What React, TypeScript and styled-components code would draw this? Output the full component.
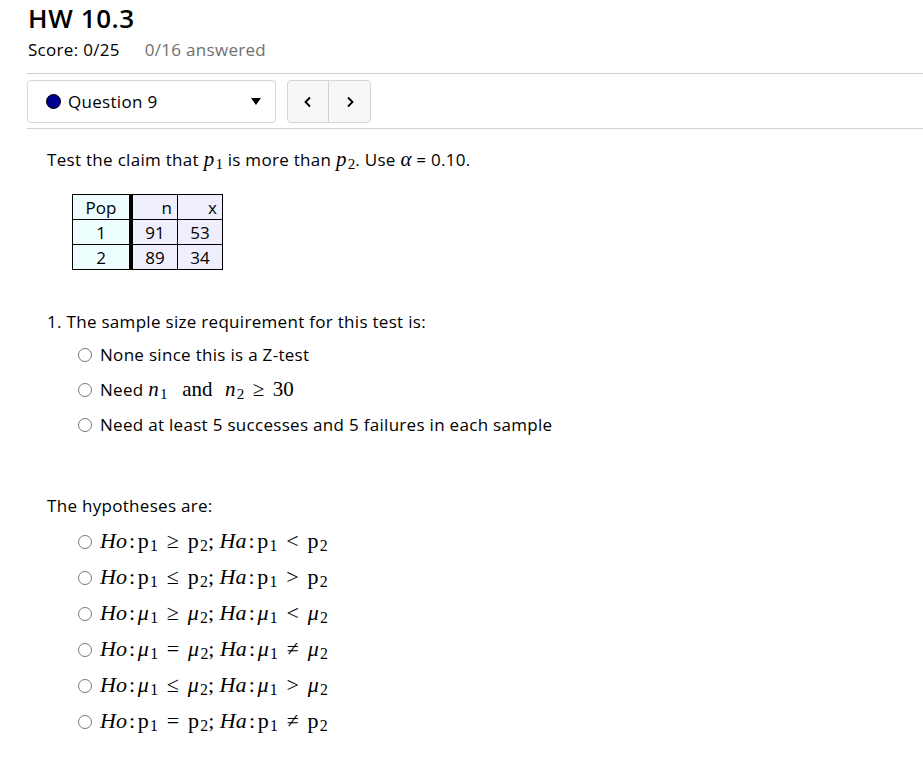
import React from "react";
import styled, { createGlobalStyle } from "styled-components";

const Global = createGlobalStyle`
  html, body { margin: 0; padding: 0; background: #fff; }
  body { font-family: "Open Sans", "Noto Sans", sans-serif; color: #000; letter-spacing: 0.3px; }
`;

const Page = styled.div`
  padding: 1px 0 0 27px;
  width: 896px;
`;

const Title = styled.h1`
  margin: 0 0 0 1px;
  font-size: 26px;
  font-weight: 600;
  line-height: 34px;
  letter-spacing: 0.6px;
`;

const ScoreRow = styled.div`
  display: flex;
  gap: 25px;
  margin: 3px 0 0 1px;
  font-size: 17px;
  line-height: 24px;
`;

const Muted = styled.span`
  color: #6f6f6f;
`;

const Rule = styled.hr<{ $top: number }>`
  border: 0;
  border-top: 1px solid #d0d0d0;
  margin: ${(p) => p.$top}px 0 0 0;
`;

const Toolbar = styled.div`
  display: flex;
  gap: 11px;
  margin-top: 6px;
`;

const Select = styled.div`
  box-sizing: border-box;
  width: 249px;
  height: 43px;
  border: 1px solid #d6d6d6;
  border-radius: 4px;
  display: flex;
  align-items: center;
  padding: 0 14px 0 18px;
  font-size: 17px;
`;

const Dot = styled.span`
  width: 13px;
  height: 13px;
  border-radius: 50%;
  background: #00008f;
  border: 1px solid #000;
  margin-right: 7px;
`;

const Caret = styled.span`
  margin-left: auto;
  width: 0;
  height: 0;
  border-left: 5px solid transparent;
  border-right: 5px solid transparent;
  border-top: 7px solid #000;
`;

const NavGroup = styled.div`
  display: flex;
  box-sizing: border-box;
  height: 43px;
  border: 1px solid #d6d6d6;
  border-radius: 4px;
  background: #f7f7f7;
  overflow: hidden;
`;

const NavBtn = styled.button<{ $first?: boolean }>`
  width: 41px;
  border: 0;
  border-right: ${(p) => (p.$first ? "1px solid #d0d0d0" : "0")};
  background: transparent;
  display: flex;
  align-items: center;
  justify-content: center;
  padding: 0;
`;

const Question = styled.div`
  padding: 18px 0 0 20px;
  font-size: 17px;
  line-height: 24px;
`;

const MathText = styled.span<{ $size?: number }>`
  font-family: "Liberation Serif", "DejaVu Serif", serif;
  font-size: ${(p) => p.$size ?? 21}px;
  letter-spacing: 0;
  white-space: pre;
`;

const It = styled.span`
  font-style: italic;
`;

const Sub = styled.span`
  font-style: normal;
  font-size: 0.72em;
  position: relative;
  top: 0.22em;
  margin-left: 0.08em;
`;

const Rel = styled.span`
  margin: 0 0.4em;
`;

const Colon = styled.span`
  margin: 0 0.12em 0 0.1em;
`;

const Word = styled.span`
  margin: 0 0.6em 0 0.7em;
`;

const Table = styled.table`
  border-collapse: collapse;
  margin: 21px 0 0 25px;
  font-size: 17px;
  line-height: 22px;
`;

const Cell = styled.td<{ $pop?: boolean; $align?: string }>`
  border: 1px solid #000;
  border-right: ${(p) => (p.$pop ? "4px solid #000" : "1px solid #000")};
  background: ${(p) => (p.$pop ? "#eefefe" : "#efeefd")};
  padding: 1px 5px 0 5px;
  height: 23px;
  text-align: ${(p) => p.$align || "center"};
  width: ${(p) => (p.$pop ? "46px" : "34px")};
  letter-spacing: 0;
`;

const Part = styled.div<{ $top: number }>`
  margin-top: ${(p) => p.$top}px;
`;

const Options = styled.div<{ $gap: number; $top: number }>`
  display: flex;
  flex-direction: column;
  gap: ${(p) => p.$gap}px;
  padding-left: 31px;
  margin-top: ${(p) => p.$top}px;
`;

const Option = styled.label`
  display: flex;
  align-items: center;
  gap: 8px;
  height: 24px;
`;

const Radio = styled.span`
  box-sizing: border-box;
  width: 14px;
  height: 14px;
  border-radius: 50%;
  border: 1px solid #767676;
  background: #fff;
  flex: none;
`;

const Var = ({ v, s, upright }: { v: string; s: string; upright?: boolean }) => (
  <span>
    {upright ? v : <It>{v}</It>}
    <Sub>{s}</Sub>
  </span>
);

const hyps: [string, string, string][] = [
  ["p", "≥", "<"],
  ["p", "≤", ">"],
  ["μ", "≥", "<"],
  ["μ", "=", "≠"],
  ["μ", "≤", ">"],
  ["p", "=", "≠"],
];

const Chevron = ({ dir }: { dir: "l" | "r" }) => (
  <svg width="10" height="12" viewBox="0 0 10 12">
    <path
      d={dir === "l" ? "M7 1.5 L2.5 6 L7 10.5" : "M3 1.5 L7.5 6 L3 10.5"}
      fill="none"
      stroke="#000"
      strokeWidth="1.8"
    />
  </svg>
);

export default function App() {
  return (
    <>
      <Global />
      <Page>
        <Title>HW 10.3</Title>
        <ScoreRow>
          <span>Score: 0/25</span>
          <Muted>0/16 answered</Muted>
        </ScoreRow>
        <Rule $top={11} />
        <Toolbar>
          <Select>
            <Dot />
            Question 9
            <Caret />
          </Select>
          <NavGroup>
            <NavBtn $first>
              <Chevron dir="l" />
            </NavBtn>
            <NavBtn>
              <Chevron dir="r" />
            </NavBtn>
          </NavGroup>
        </Toolbar>
        <Rule $top={5} />
        <Question>
          <div>
            Test the claim that{" "}
            <MathText><Var v="p" s="1" /></MathText> is more than{" "}
            <MathText><Var v="p" s="2" /></MathText>. Use{" "}
            <MathText><It>α</It></MathText> = 0.10.
          </div>
          <Table>
            <tbody>
              <tr>
                <Cell $pop>Pop</Cell>
                <Cell $align="right">n</Cell>
                <Cell $align="right">x</Cell>
              </tr>
              <tr>
                <Cell $pop>1</Cell>
                <Cell>91</Cell>
                <Cell>53</Cell>
              </tr>
              <tr>
                <Cell $pop>2</Cell>
                <Cell>89</Cell>
                <Cell>34</Cell>
              </tr>
            </tbody>
          </Table>
          <Part $top={40}>
            <div>1. The sample size requirement for this test is:</div>
            <Options $gap={11} $top={9}>
              <Option>
                <Radio />
                None since this is a Z-test
              </Option>
              <Option>
                <Radio />
                <span>
                  Need{" "}
                  <MathText>
                    <Var v="n" s="1" />
                    <Word>and</Word>
                    <Var v="n" s="2" />
                    <Rel>≥</Rel>30
                  </MathText>
                </span>
              </Option>
              <Option>
                <Radio />
                Need at least 5 successes and 5 failures in each sample
              </Option>
            </Options>
          </Part>
          <Part $top={57}>
            <div>The hypotheses are:</div>
            <Options $gap={12} $top={12}>
              {hyps.map(([a, r1, r2], i) => (
                <Option key={i}>
                  <Radio />
                  <MathText $size={22}>
                    <It>Ho</It>
                    <Colon>:</Colon>
                    <Var v={a} s="1" upright={a === "p"} />
                    <Rel>{r1}</Rel>
                    <Var v={a} s="2" upright={a === "p"} />;{" "}
                    <It>Ha</It>
                    <Colon>:</Colon>
                    <Var v={a} s="1" upright={a === "p"} />
                    <Rel>{r2}</Rel>
                    <Var v={a} s="2" upright={a === "p"} />
                  </MathText>
                </Option>
              ))}
            </Options>
          </Part>
        </Question>
      </Page>
    </>
  );
}
